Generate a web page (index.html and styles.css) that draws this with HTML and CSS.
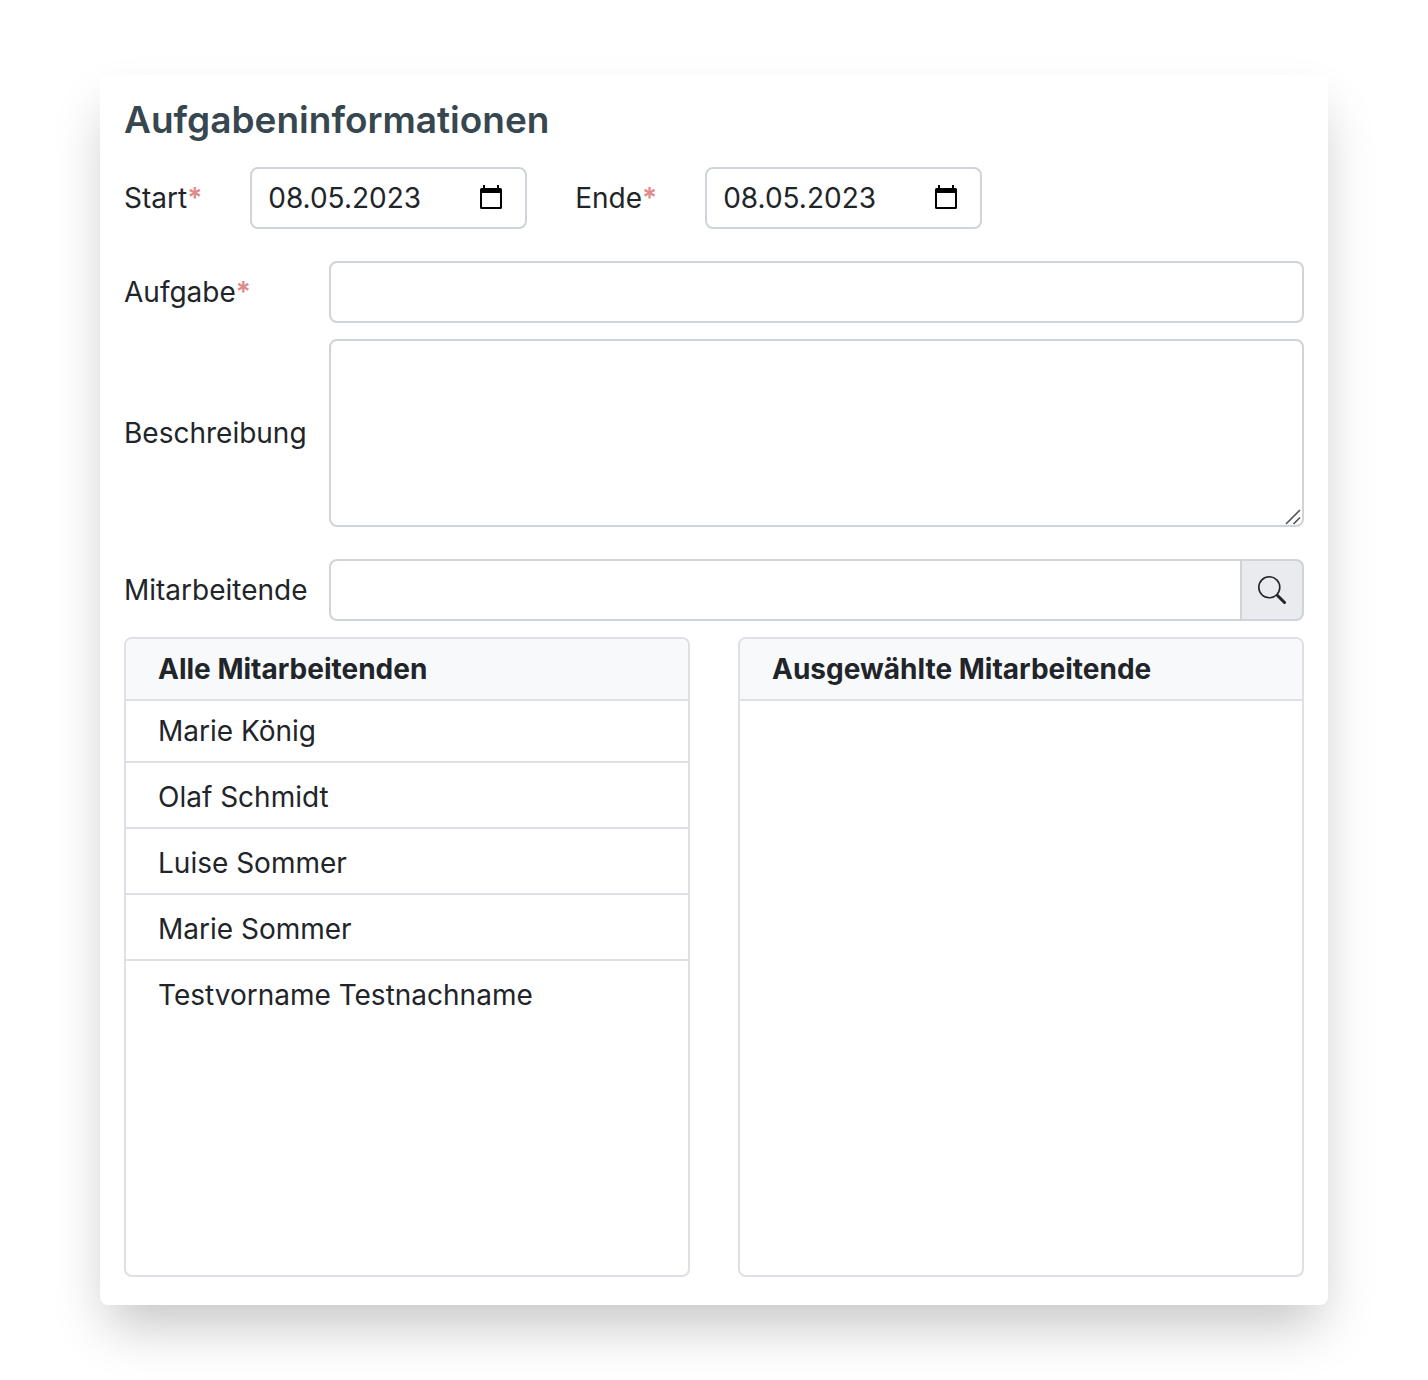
FILE: index.html
```html
<!DOCTYPE html>
<html lang="de">
<head>
    <meta charset="UTF-8">
    <meta name="viewport" content="width=device-width, initial-scale=1.0">
    <title>Aufgabeninformationen</title>
    <link rel="stylesheet" href="styles.css">
</head>
<body>

    <form class="card">
        <h1 class="card-title">Aufgabeninformationen</h1>

        <div class="date-row">
            <label for="start">Start<span class="required">*</span></label>
            <div class="date-field">
                <input type="text" id="start" value="08.05.2023" required>
                <button type="button" class="calendar-button" aria-label="Startdatum wählen">
                    <svg width="24" height="26" viewBox="0 0 24 26">
                        <path fill-rule="evenodd" d="M4 0h2v3h12V0h2v3h1.500q1.500 0 1.500 1.500v18q0 1.500-1.500 1.500h-19Q1 24 1 22.500v-18Q1 3 2.500 3H4zM3 8v14h18V8z"/>
                    </svg>
                </button>
            </div>
            <label for="end">Ende<span class="required">*</span></label>
            <div class="date-field">
                <input type="text" id="end" value="08.05.2023" required>
                <button type="button" class="calendar-button" aria-label="Enddatum wählen">
                    <svg width="24" height="26" viewBox="0 0 24 26">
                        <path fill-rule="evenodd" d="M4 0h2v3h12V0h2v3h1.500q1.500 0 1.500 1.500v18q0 1.500-1.500 1.500h-19Q1 24 1 22.500v-18Q1 3 2.500 3H4zM3 8v14h18V8z"/>
                    </svg>
                </button>
            </div>
        </div>

        <div class="form-row">
            <label for="task">Aufgabe<span class="required">*</span></label>
            <input type="text" id="task" class="form-control" required>
        </div>

        <div class="form-row description-row">
            <label for="description">Beschreibung</label>
            <div class="textarea-wrap">
                <textarea id="description" class="form-control"></textarea>
                <svg class="grip" width="16" height="16" viewBox="0 0 16 16">
                    <path d="M1 15L15 1M8.500 15l6.500-6.500" fill="none" stroke="#555" stroke-width="1.700"/>
                </svg>
            </div>
        </div>

        <div class="form-row">
            <label for="employees">Mitarbeitende</label>
            <div class="search-group">
                <input type="text" id="employees" class="form-control">
                <button type="button" class="search-button" aria-label="Suchen">
                    <svg width="28" height="28" viewBox="0 0 28 28" fill="none" stroke="#212529" stroke-linecap="round">
                        <circle cx="11.300" cy="11.300" r="10.500" stroke-width="1.600"/>
                        <path d="M19.500 19.500l7 7" stroke-width="3"/>
                    </svg>
                </button>
            </div>
        </div>

        <div class="lists">
            <section class="list-box">
                <h2>Alle Mitarbeitenden</h2>
                <ul>
                    <li>Marie König</li>
                    <li>Olaf Schmidt</li>
                    <li>Luise Sommer</li>
                    <li>Marie Sommer</li>
                    <li>Testvorname Testnachname</li>
                </ul>
            </section>
            <section class="list-box">
                <h2>Ausgewählte Mitarbeitende</h2>
                <ul></ul>
            </section>
        </div>
    </form>

</body>
</html>
```
FILE: styles.css
```css
* {
    box-sizing: border-box;
}

body {
    margin: 0;
    padding: 75px 100px;
    font-family: Inter, "Liberation Sans", sans-serif;
    font-size: 28px;
    line-height: 42px;
    color: #212529;
    background: white;
}

input, textarea, button {
    font: inherit;
    color: inherit;
}

.card {
    padding: 24px 24px 28px;
    background: white;
    border-radius: 8px;
    box-shadow: 0 28px 50px -8px rgba(0, 0, 0, 0.23);
}

.card-title {
    margin: 0 0 26px;
    font-size: 37px;
    line-height: 42px;
    font-weight: 600;
    color: #37474f;
}

.required {
    font-weight: 600;
    color: #e08a8a;
}

/* Date fields */
.date-row {
    display: flex;
    align-items: center;
    gap: 48px;
    margin-bottom: 32px;
}

.date-field {
    display: flex;
    align-items: center;
    width: 277px;
    height: 62px;
    padding: 0 22px 0 16px;
    border: 2px solid #ced4da;
    border-radius: 8px;
}

.date-field input {
    flex: 1;
    min-width: 0;
    padding: 0;
    border: none;
    outline: none;
    background: none;
}

.calendar-button {
    display: flex;
    padding: 0;
    border: none;
    background: none;
    cursor: pointer;
}

/* Form rows */
.form-row {
    display: grid;
    grid-template-columns: 205px 1fr;
    align-items: center;
    margin-bottom: 16px;
}

.description-row {
    margin-bottom: 32px;
}

.form-control {
    display: block;
    width: 100%;
    height: 62px;
    padding: 8px 16px;
    border: 2px solid #ced4da;
    border-radius: 8px;
    background: white;
    outline: none;
}

.textarea-wrap {
    position: relative;
}

.textarea-wrap textarea {
    height: 188px;
    resize: none;
}

.grip {
    position: absolute;
    right: 3px;
    bottom: 2px;
}

.search-group {
    display: flex;
}

.search-group .form-control {
    flex: 1;
    min-width: 0;
    border-right: none;
    border-radius: 8px 0 0 8px;
}

.search-button {
    display: flex;
    align-items: center;
    justify-content: center;
    width: 64px;
    padding: 0;
    border: 2px solid #ced4da;
    border-radius: 0 8px 8px 0;
    background: #e9ebef;
    cursor: pointer;
}

/* Employee lists */
.lists {
    display: grid;
    grid-template-columns: 1fr 1fr;
    gap: 48px;
}

.list-box {
    min-height: 640px;
    border: 2px solid #dee0e5;
    border-radius: 8px;
    overflow: hidden;
}

.list-box h2 {
    margin: 0;
    padding: 9px 32px;
    font-size: 28px;
    line-height: 42px;
    font-weight: 700;
    background: #f8f9fb;
    border-bottom: 2px solid #dee0e5;
}

.list-box ul {
    margin: 0;
    padding: 0;
    list-style: none;
}

.list-box li {
    padding: 9px 32px;
}

.list-box li + li {
    padding-top: 13px;
    border-top: 2px solid #dee0e5;
}
```
